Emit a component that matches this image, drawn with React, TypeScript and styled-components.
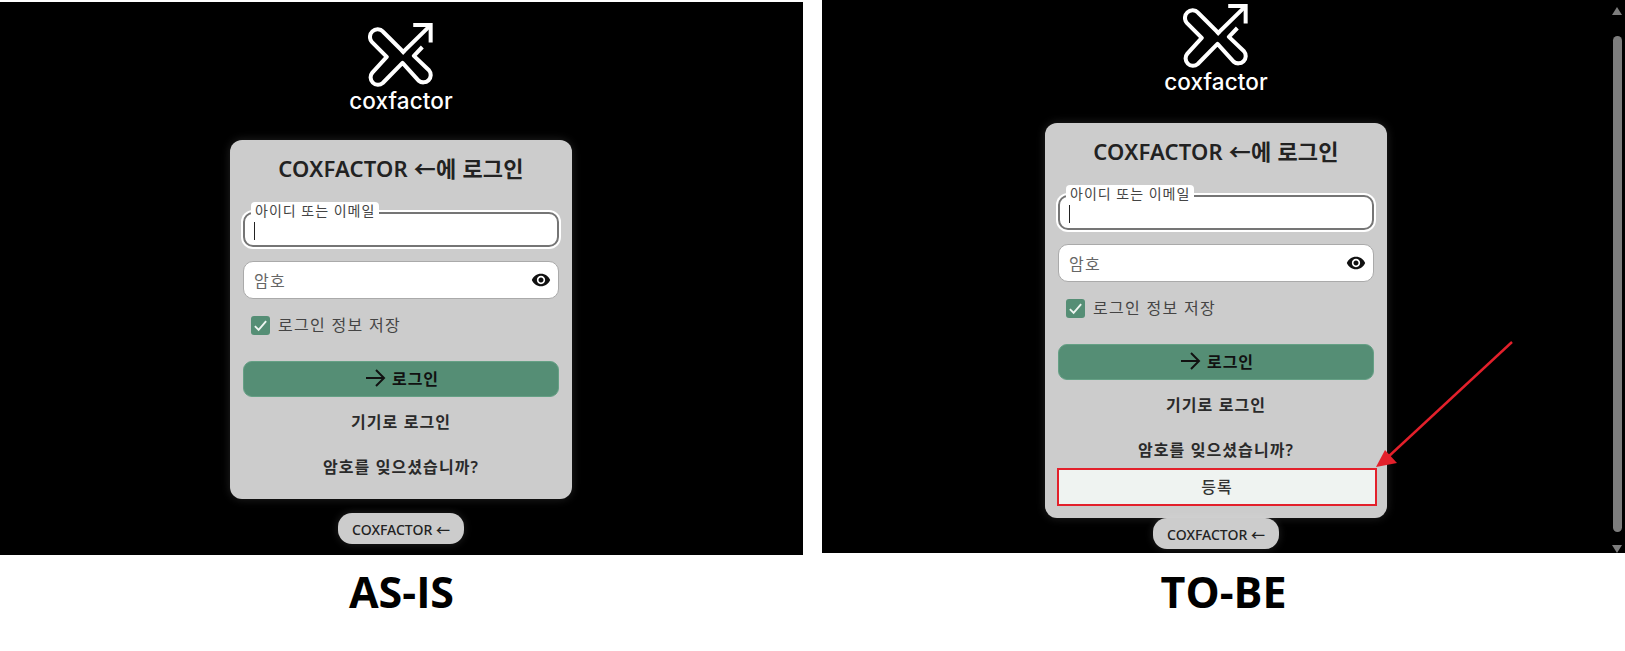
import React from "react";
import styled, { createGlobalStyle } from "styled-components";

const Global = createGlobalStyle`
  html, body { margin: 0; padding: 0; background: #fff; overflow: hidden; }
  * { box-sizing: border-box; }
  body { font-family: "Noto Sans", "Noto Sans CJK KR", sans-serif; }
`;

const Slide = styled.div`
  width: 1625px;
  height: 651px;
  display: grid;
  grid-template-columns: 803px 803px;
  grid-template-rows: 555px 96px;
  column-gap: 19px;
`;

const Panel = styled.section<{ $top: number; $pad: number; $inset: number }>`
  position: relative;
  margin-top: ${p => p.$top}px;
  height: 553px;
  padding: ${p => p.$pad}px ${p => p.$inset}px 0 0;
  background: #000;
  display: flex;
`;

const Screen = styled.div`
  flex: 1;
  display: flex;
  flex-direction: column;
  align-items: center;
`;

const Logo = styled.div<{ $height: number }>`
  height: ${p => p.$height}px;
  display: flex;
  flex-direction: column;
  align-items: center;
  color: #fff;
`;

const LogoMark = styled.svg`
  width: 66px;
  height: 66px;
  display: block;
`;

const LogoWord = styled.div`
  margin-top: -1px;
  font-family: Inter, sans-serif;
  font-size: 22.5px;
  line-height: 28px;
  font-weight: 500;
  letter-spacing: 0.1px;
`;

const Card = styled.div<{ $bottom: number }>`
  width: 342px;
  padding: 16px 13px ${p => p.$bottom}px;
  background: #cccccc;
  border-radius: 12px;
  box-shadow: 0 0 10px rgba(255, 255, 255, 0.14);
  display: flex;
  flex-direction: column;
`;

const Title = styled.h1`
  margin: 0 0 32px;
  height: 24px;
  font-size: 22px;
  line-height: 24px;
  font-weight: 600;
  letter-spacing: 0.2px;
  color: #222;
  text-align: center;
  white-space: nowrap;
`;

const FocusField = styled.div`
  position: relative;
  height: 35px;
  margin-bottom: 14px;
  background: #fff;
  border: 2px solid #757575;
  border-radius: 10px;
  box-shadow: 0 0 0 2px #fff;
`;

const FloatLabel = styled.span`
  position: absolute;
  left: 6px;
  top: -12px;
  height: 18px;
  padding: 0 4px 0 4px;
  background: #fff;
  border-radius: 4px;
  font-size: 14px;
  line-height: 17px;
  letter-spacing: 1px;
  color: #444;
  white-space: nowrap;
`;

const Caret = styled.i`
  position: absolute;
  left: 9px;
  top: 8px;
  width: 1px;
  height: 18px;
  background: #222;
`;

const Field = styled.div`
  height: 38px;
  padding: 0 7px 1px 10px;
  background: #fff;
  border: 1px solid #aaa;
  border-radius: 10px;
  display: flex;
  align-items: center;
  justify-content: space-between;
  font-size: 16px;
  letter-spacing: 1.2px;
  color: #666;
`;

const Eye = styled.svg`
  width: 20px;
  height: 20px;
  fill: #111;
`;

const RememberRow = styled.label`
  margin: 17px 0 26px 8px;
  height: 19px;
  display: flex;
  align-items: center;
  gap: 8px;
  font-size: 16px;
  letter-spacing: 1.3px;
  color: #444;
`;

const RememberText = styled.span`
  margin-top: -3px;
`;

const Check = styled.span`
  width: 19px;
  height: 19px;
  border-radius: 3px;
  background: #558e75;
  display: flex;
  align-items: center;
  justify-content: center;
`;

const LoginButton = styled.div`
  height: 36px;
  margin-bottom: 13px;
  padding-bottom: 2px;
  background: #558e75;
  border: 1px solid #65a085;
  border-radius: 9px;
  display: flex;
  align-items: center;
  justify-content: center;
  gap: 5px;
  font-size: 16px;
  letter-spacing: 1px;
  font-weight: 700;
  color: #111;
`;

const TextAction = styled.div<{ $gap: number }>`
  height: 24px;
  margin-bottom: ${p => p.$gap}px;
  font-size: 16px;
  letter-spacing: 1.1px;
  line-height: 24px;
  font-weight: 600;
  color: #2a2a2a;
  text-align: center;
`;

const RegisterBox = styled.div`
  height: 38px;
  margin-right: -3px;
  margin-left: -1px;
  padding-bottom: 3px;
  background: #eff3f1;
  border: 2px solid #e3202b;
  display: flex;
  align-items: center;
  justify-content: center;
  font-size: 16px;
  letter-spacing: 1px;
  font-weight: 500;
  color: #333;
`;

const Pill = styled.div<{ $top: number }>`
  margin-top: ${p => p.$top}px;
  width: 126px;
  height: 31px;
  background: #cccccc;
  border-radius: 14px;
  box-shadow: 0 0 8px rgba(255, 255, 255, 0.14);
  display: flex;
  align-items: center;
  justify-content: center;
  font-size: 14px;
  font-weight: 500;
  color: #222;
`;

const Scrollbar = styled.div`
  width: 15px;
  padding: 4px 3px 0 2px;
  display: flex;
  flex-direction: column;
  align-items: center;
`;

const ScrollArrow = styled.svg`
  width: 10px;
  height: 8px;
  fill: #7d7d7d;
  flex: none;
`;

const ScrollThumb = styled.div`
  width: 9px;
  height: 500px;
  margin: 21px 0 13px;
  background: #7d7d7d;
  border-radius: 5px;
`;

const Callout = styled.svg`
  position: absolute;
  left: 540px;
  top: 329px;
  width: 170px;
  height: 145px;
  overflow: visible;
`;

const Caption = styled.div`
  padding-top: 10px;
  text-align: center;
  font-family: "Open Sans", sans-serif;
  font-size: 43px;
  line-height: 54px;
  font-weight: 700;
  color: #000;
`;

const CoxMark = () => (
  <LogoMark viewBox="85 33 197 197" fill="none" stroke="currentColor" strokeWidth="12" strokeLinejoin="round" strokeLinecap="square">
    <path d="M190 122 L130 62 A22 22 0 0 0 97 93 L141 137 L98 184 A22 22 0 0 0 129 215 L188 155 L236 208 A22 22 0 0 0 267 177 L222 134 L243 112" />
    <path d="M190 122 L266 48" />
    <path d="M226 42 H272 V88" strokeLinejoin="miter" />
  </LogoMark>
);

const EyeIcon = () => (
  <Eye viewBox="0 0 24 24">
    <path d="M12 4.5C7 4.5 2.73 7.61 1 12c1.73 4.39 6 7.5 11 7.5s9.27-3.11 11-7.5c-1.73-4.39-6-7.5-11-7.5zM12 17c-2.76 0-5-2.24-5-5s2.24-5 5-5 5 2.24 5 5-2.24 5-5 5zm0-8c-1.66 0-3 1.34-3 3s1.34 3 3 3 3-1.34 3-3-1.34-3-3-3z" />
  </Eye>
);

const LoginScreen = ({ register }: { register?: boolean }) => (
  <Screen>
    <Logo $height={register ? 120 : 118}>
      <CoxMark />
      <LogoWord>coxfactor</LogoWord>
    </Logo>
    <Card $bottom={register ? 12 : 20}>
      <Title>COXFACTOR ←에 로그인</Title>
      <FocusField>
        <FloatLabel>아이디 또는 이메일</FloatLabel>
        <Caret />
      </FocusField>
      <Field>
        암호
        <EyeIcon />
      </Field>
      <RememberRow>
        <Check>
          <svg width="15" height="15" viewBox="0 0 24 24" fill="none" stroke="#eef5f1" strokeWidth="3">
            <path d="M3 13l6 6L21 5" />
          </svg>
        </Check>
        <RememberText>로그인 정보 저장</RememberText>
      </RememberRow>
      <LoginButton>
        <svg width="24" height="24" viewBox="0 0 24 24" fill="none" stroke="#111" strokeWidth="2">
          <path d="M3 12h18M13 4l8 8-8 8" />
        </svg>
        로그인
      </LoginButton>
      <TextAction $gap={21}>기기로 로그인</TextAction>
      <TextAction $gap={register ? 6 : 0}>암호를 잊으셨습니까?</TextAction>
      {register && <RegisterBox>등록</RegisterBox>}
    </Card>
    <Pill $top={register ? 0 : 14}>COXFACTOR ←</Pill>
  </Screen>
);

export default function App() {
  return (
    <>
      <Global />
      <Slide>
        <Panel $top={2} $pad={20} $inset={1}>
          <LoginScreen />
        </Panel>
        <Panel $top={0} $pad={3} $inset={0}>
          <LoginScreen register />
          <Scrollbar>
            <ScrollArrow viewBox="0 0 10 8"><path d="M5 0l5 8H0z" /></ScrollArrow>
            <ScrollThumb />
            <ScrollArrow viewBox="0 0 10 8"><path d="M0 0h10L5 8z" /></ScrollArrow>
          </Scrollbar>
          <Callout viewBox="0 0 170 145">
            <path d="M150 13 L26 128" stroke="#e3202b" strokeWidth="2.4" fill="none" />
            <path d="M14 138 L23 121 L35 134 Z" fill="#e3202b" />
          </Callout>
        </Panel>
        <Caption>AS-IS</Caption>
        <Caption>TO-BE</Caption>
      </Slide>
    </>
  );
}
